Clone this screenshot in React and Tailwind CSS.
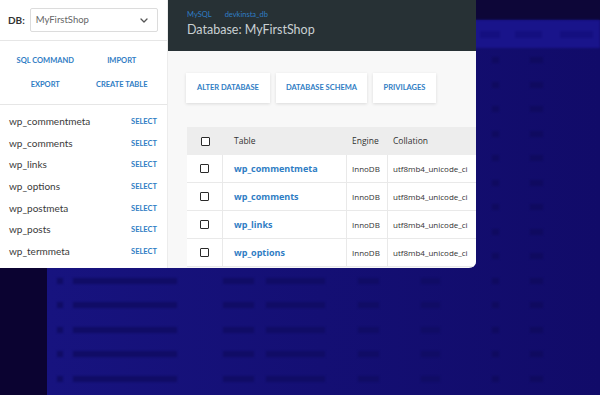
import React from "react";

const leftTables = [
  "wp_commentmeta",
  "wp_comments",
  "wp_links",
  "wp_options",
  "wp_postmeta",
  "wp_posts",
  "wp_termmeta",
];

const mainTables = ["wp_commentmeta", "wp_comments", "wp_links", "wp_options"];

function BgRow() {
  return (
    <div className="flex items-center h-[24.5px] shrink-0 blur-[1px]">
      <div className="ml-[10px] w-[6px] h-[6px] bg-[#100c66]" />
      <div className="ml-[10px] w-[104px] h-[6px] bg-[#100c66]" />
      <div className="ml-[46px] w-[31px] h-[6px] bg-[#100c66]" />
      <div className="ml-[12px] w-[59px] h-[6px] bg-[#100c66]" />
      <div className="ml-[33px] w-[21px] h-[6px] bg-[#100c66]" />
      <div className="ml-[42px] w-[19px] h-[6px] bg-[#100c66]" />
      <div className="ml-[52px] w-[7px] h-[6px] bg-[#0f0a60]" />
      <div className="ml-[31px] w-[13px] h-[6px] bg-[#0f0a60]" />
    </div>
  );
}

function Checkbox() {
  return (
    <div className="w-[9px] h-[9px] border-[1.5px] border-[#2a2a2a] rounded-[1px] bg-white" />
  );
}

export default function App() {
  const rows = Array.from({ length: 14 });
  return (
    <div className="relative w-[600px] h-[395px] overflow-hidden bg-[#0b0331]">
      {/* blurred background screen */}
      <div className="flex w-full h-full">
        <div className="w-[47px] h-full bg-[#0b0331] shrink-0" />
        <div className="flex-1 flex flex-col bg-gradient-to-r from-[#17137f] to-[#110b69]">
          <div className="h-[20px] bg-[#0d0638] shrink-0" />
          <div className="h-[28px] bg-[#19148b] shrink-0 flex items-center blur-[1px]">
            <div className="ml-[433px] w-[20px] h-[7px] bg-[#140f80]" />
            <div className="ml-[15px] w-[27px] h-[7px] bg-[#140f80]" />
            <div className="ml-[18px] w-[33px] h-[7px] bg-[#140f80]" />
          </div>
          {rows.map((_, i) => (
            <BgRow key={i} />
          ))}
        </div>
      </div>

      {/* foreground windows */}
      <div className="absolute top-0 left-0 flex">
        {/* left panel */}
        <div className="w-[168px] h-[268px] bg-white border-r border-[#ececec] flex flex-col font-['Lato',sans-serif]">
          <div className="flex items-center h-[41px] pl-[8px] pr-[9px] border-b border-[#e6e6e6]">
            <span className="text-[10px] font-bold text-[#333] mr-[5px]">DB:</span>
            <div className="flex-1 h-[24px] border border-[#dcdcdc] rounded-[2px] flex items-center justify-between pl-[5px] pr-[9px]">
              <span className="text-[9.5px] text-[#666]">MyFirstShop</span>
              <svg width="8" height="5" viewBox="0 0 8 5" fill="none">
                <path d="M1 1l3 3 3-3" stroke="#555" strokeWidth="1.3" strokeLinecap="round" strokeLinejoin="round" />
              </svg>
            </div>
          </div>
          <div className="grid grid-cols-2 px-[7px] pt-[15px] pb-[14px] gap-y-[14px] border-b border-[#e6e6e6] text-[7.5px] font-bold text-[#2f7dc4] text-center leading-[10px]">
            <span>SQL COMMAND</span>
            <span>IMPORT</span>
            <span>EXPORT</span>
            <span>CREATE TABLE</span>
          </div>
          <div className="flex flex-col pt-[6px]">
            {leftTables.map((t) => (
              <div key={t} className="flex items-center justify-between h-[21.6px] pl-[9px] pr-[10px]">
                <span className="text-[10px] text-[#3a3a3a]">{t}</span>
                <span className="text-[7.5px] font-bold text-[#2f7dc4]">SELECT</span>
              </div>
            ))}
          </div>
        </div>

        {/* main panel */}
        <div className="w-[308px] h-[268px] bg-[#f8f8f8] rounded-br-[7px] overflow-hidden flex flex-col">
          <div className="h-[51px] bg-[#273135] shrink-0 pl-[19px] pt-[10px] font-['Lato',sans-serif]">
            <div className="flex gap-[13px] text-[7.5px] text-[#2f7dc4] leading-[10px]">
              <span>MySQL</span>
              <span>devkinsta_db</span>
            </div>
            <div className="text-[12.5px] text-[#c9d0d3] leading-[16px] mt-[2px]">Database: MyFirstShop</div>
          </div>
          <div className="flex gap-[6px] pl-[18px] pt-[22px] font-['Lato',sans-serif]">
            <div className="w-[84px] h-[30px] bg-white shadow-[0_1px_3px_rgba(0,0,0,0.12)] flex items-center justify-center text-[7.5px] font-bold text-[#2f7dc4]">ALTER DATABASE</div>
            <div className="w-[91px] h-[30px] bg-white shadow-[0_1px_3px_rgba(0,0,0,0.12)] flex items-center justify-center text-[7.5px] font-bold text-[#2f7dc4]">DATABASE SCHEMA</div>
            <div className="w-[63px] h-[30px] bg-white shadow-[0_1px_3px_rgba(0,0,0,0.12)] flex items-center justify-center text-[7.5px] font-bold text-[#2f7dc4]">PRIVILAGES</div>
          </div>
          <div className="ml-[19px] mt-[24px] w-[330px] shrink-0 font-['Open_Sans',sans-serif]">
            <div className="flex h-[28px] bg-[#ededed] items-center text-[8.5px] text-[#333]">
              <div className="w-[36px] flex justify-center"><Checkbox /></div>
              <div className="w-[124px] pl-[11px]">Table</div>
              <div className="w-[41px] pl-[5px]">Engine</div>
              <div className="flex-1 pl-[5px]">Collation</div>
            </div>
            {mainTables.map((t) => (
              <div key={t} className="flex h-[28px] bg-white border-b border-[#e9e9e9] text-[8px] text-[#333]">
                <div className="w-[36px] flex items-center justify-center border-r border-[#e9e9e9]"><Checkbox /></div>
                <div className="w-[124px] pl-[11px] flex items-center border-r border-[#e9e9e9] text-[9px] font-bold text-[#2f7dc4]">{t}</div>
                <div className="w-[41px] pl-[5px] flex items-center border-r border-[#e9e9e9]">InnoDB</div>
                <div className="flex-1 pl-[5px] flex items-center">utf8mb4_unicode_ci</div>
              </div>
            ))}
          </div>
        </div>
      </div>
    </div>
  );
}
